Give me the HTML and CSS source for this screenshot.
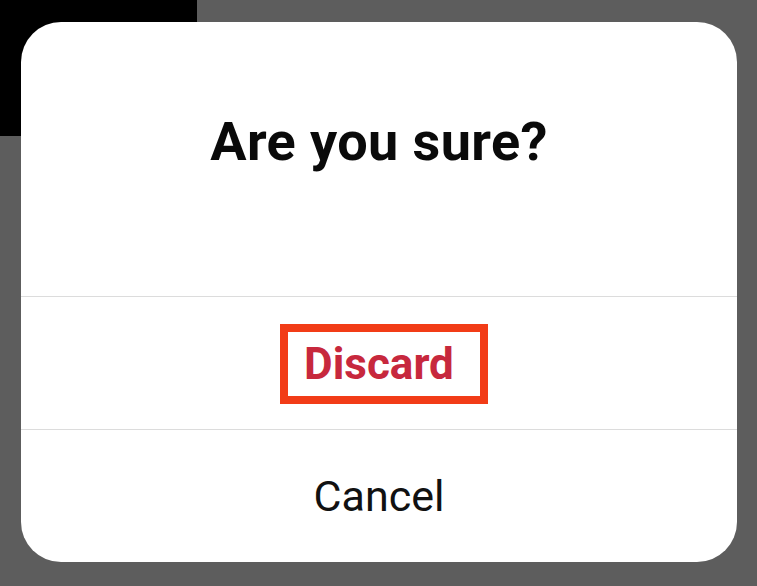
FILE: index.html
```html
<!DOCTYPE html>
<html lang="en">
<head>
<meta charset="utf-8">
<title>Are you sure?</title>
<link rel="stylesheet" href="styles.css">
</head>
<body>
<div class="backdrop-block"></div>
<div class="dialog">
  <div class="dialog-title">Are you sure?</div>
  <div class="dialog-row">
    <span class="discard-box">Discard</span>
  </div>
  <div class="dialog-row cancel">Cancel</div>
</div>
</body>
</html>
```
FILE: styles.css
```css
html, body {
  margin: 0;
  padding: 0;
}
body {
  width: 757px;
  height: 586px;
  background: #5d5d5d;
  font-family: Roboto, "Liberation Sans", Arial, sans-serif;
  position: relative;
  overflow: hidden;
}
.backdrop-block {
  position: absolute;
  left: 0;
  top: 0;
  width: 197px;
  height: 136px;
  background: #000;
}
.dialog {
  position: relative;
  margin: 22px 20px 0 21px;
  width: 716px;
  height: 540px;
  background: #fff;
  border-radius: 40px;
  display: flex;
  flex-direction: column;
  overflow: hidden;
}
.dialog-title {
  box-sizing: border-box;
  height: 274px;
  padding-top: 93px;
  text-align: center;
  font-size: 54px;
  line-height: 1;
  font-weight: 700;
  letter-spacing: 0.4px;
  color: #0a0a0a;
}
.dialog-row {
  height: 132px;
  border-top: 1px solid #dcdcdc;
  display: flex;
  align-items: center;
  justify-content: center;
}
.discard-box {
  box-sizing: border-box;
  height: 80px;
  display: inline-flex;
  align-items: center;
  border: 8px solid #f23c17;
  padding: 0 26px 1px 16px;
  margin-left: 10px;
  margin-top: 2px;
  font-size: 44px;
  font-weight: 700;
  color: #c7283d;
}
.cancel {
  font-size: 43px;
  font-weight: 400;
  color: #111;
}
```
